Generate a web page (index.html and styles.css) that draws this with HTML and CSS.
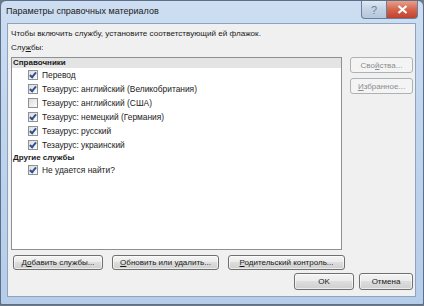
FILE: index.html
```html
<!DOCTYPE html>
<html lang="ru">
<head>
    <meta charset="UTF-8">
    <title>Параметры справочных материалов</title>
    <link rel="stylesheet" href="styles.css">
</head>
<body>
    <div class="window">
        <!-- Заголовок окна -->
        <div class="titlebar">
            <span class="title">Параметры справочных материалов</span>
            <div class="caption-buttons">
                <span class="cap-help">?</span>
                <span class="cap-close">
                    <svg width="11" height="9" viewBox="0 0 11 9"><path d="M1.5 1 L9.5 8 M9.5 1 L1.5 8" stroke="#fff" stroke-width="2.2"/></svg>
                </span>
            </div>
        </div>

        <div class="client">
            <p class="hint">Чтобы включить службу, установите соответствующий ей флажок.</p>
            <div class="label">Слу<u>ж</u>бы:</div>

            <div class="main-row">
                <div class="listbox">
                    <div class="group">Справочники</div>
                    <div class="item"><span class="check on"></span>Перевод</div>
                    <div class="item"><span class="check on"></span>Тезаурус: английский (Великобритания)</div>
                    <div class="item"><span class="check"></span>Тезаурус: английский (США)</div>
                    <div class="item"><span class="check on"></span>Тезаурус: немецкий (Германия)</div>
                    <div class="item"><span class="check on"></span>Тезаурус: русский</div>
                    <div class="item"><span class="check on"></span>Тезаурус: украинский</div>
                    <div class="group plain">Другие службы</div>
                    <div class="item"><span class="check on"></span>Не удается найти?</div>
                </div>
                <div class="side">
                    <button class="btn" disabled>Сво<u>й</u>ства...</button>
                    <button class="btn" disabled><u>И</u>збранное...</button>
                </div>
            </div>

            <div class="actions">
                <button class="btn">Д<u>о</u>бавить службы...</button>
                <button class="btn"><u>О</u>бновить или удалить...</button>
                <button class="btn"><u>Р</u>одительский контроль...</button>
            </div>

            <div class="footer">
                <button class="btn ok">OK</button>
                <button class="btn cancel">Отмена</button>
            </div>
        </div>
    </div>
</body>
</html>
```

FILE: styles.css
```css
/* Общие стили */
body {
    margin: 0;
    width: 424px;
    height: 306px;
    overflow: hidden;
    background: #6f7a86;
    font-family: 'Liberation Sans', Arial, sans-serif;
    font-size: 8px;
    color: #1a1a1a;
}

u {
    text-decoration: underline;
    text-underline-offset: 1px;
}

.window {
    width: 424px;
    height: 305px;
    box-sizing: border-box;
    padding: 0 7px 7px 6px;
    border: 1px solid #5b6f88;
    border-radius: 6px 6px 2px 2px;
    background: linear-gradient(to bottom, #cddef2 0%, #c0d5ee 40%, #b6cde9 100%);
    display: flex;
    flex-direction: column;
}

/* Заголовок */
.titlebar {
    height: 22px;
    display: flex;
    align-items: flex-start;
    justify-content: space-between;
}

.title {
    margin: 5px 0 0 -1px;
    font-size: 9px;
    color: #1b1b1b;
}

.caption-buttons {
    display: flex;
    margin-right: -2px;
}

.cap-help,
.cap-close {
    height: 17px;
    display: flex;
    align-items: center;
    justify-content: center;
    border: 1px solid #6b7f99;
    border-top: none;
}

.cap-help {
    width: 24px;
    border-radius: 0 0 0 4px;
    border-right: none;
    background: linear-gradient(to bottom, #dfe8f3, #c3d2e4 50%, #b5c6dc);
    color: #6f7f94;
    font-size: 11px;
}

.cap-close {
    width: 30px;
    border-radius: 0 0 4px 0;
    background: linear-gradient(to bottom, #e8a08c, #d4654f 50%, #c2402c);
}

/* Клиентская область */
.client {
    flex: 1;
    background: #f0f0f0;
    border: 1px solid #8ea3bf;
    padding: 5px 2px 0 3px;
    display: flex;
    flex-direction: column;
}

.hint {
    margin: 0;
    height: 13px;
    font-size: 8.1px;
}

.label {
    margin-top: 1px;
    height: 14px;
}

.main-row {
    display: flex;
    gap: 8px;
}

.listbox {
    width: 330px;
    height: 191px;
    background: #fff;
    border: 1px solid #8c8f94;
}

.group {
    font-weight: bold;
    background: #e4e4e4;
    height: 10px;
    line-height: 10px;
    padding-left: 1px;
}

.group.plain {
    background: none;
    margin-top: 1px;
}

.item {
    height: 14px;
    display: flex;
    align-items: center;
    padding-left: 16px;
    gap: 4px;
    font-size: 8.4px;
}

.check {
    width: 8px;
    height: 8px;
    border: 1px solid #8f9294;
    background: linear-gradient(135deg, #dcdcdc, #fbfbfb);
    position: relative;
}

.check.on::after {
    content: "";
    position: absolute;
    left: 2px;
    top: 0;
    width: 2px;
    height: 5px;
    border: solid #33518f;
    border-width: 0 2px 2px 0;
    transform: rotate(40deg);
}

/* Кнопки */
.btn {
    font-family: inherit;
    font-size: 8px;
    color: #1a1a1a;
    height: 15px;
    padding: 0 2px;
    white-space: nowrap;
    border: 1px solid #707070;
    border-radius: 3px;
    background: linear-gradient(to bottom, #f4f4f4 0%, #ebebeb 45%, #dddddd 50%, #cfcfcf 100%);
    box-shadow: inset 0 0 0 1px rgba(255, 255, 255, 0.6);
}

.btn:disabled {
    color: #8d8d8d;
    border-color: #adb2b5;
    background: #f4f4f4;
    box-shadow: none;
}

.side {
    display: flex;
    flex-direction: column;
    gap: 5px;
}

.side .btn {
    width: 63px;
    height: 16px;
}

.actions {
    display: flex;
    gap: 9px;
    margin: 5px 0 0 2px;
}

.actions .btn:nth-child(1) { width: 90px; }
.actions .btn:nth-child(2) { width: 107px; }
.actions .btn:nth-child(3) { width: 117px; }

.footer {
    display: flex;
    justify-content: flex-end;
    gap: 5px;
    margin-top: 3px;
}

.footer .btn {
    height: 17px;
}

.ok {
    width: 60px;
}

.cancel {
    width: 54px;
}
```
